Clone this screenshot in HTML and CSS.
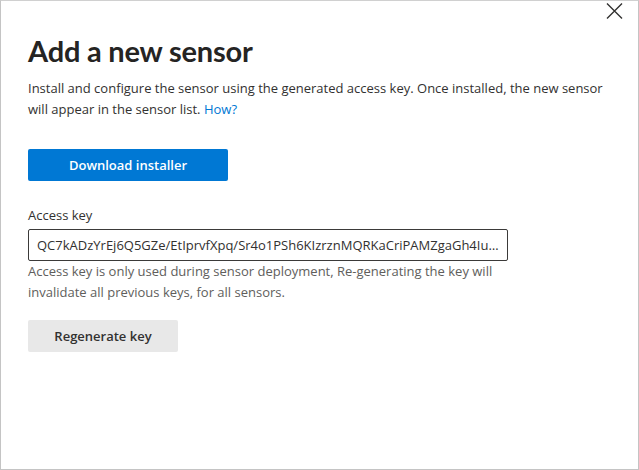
FILE: index.html
```html
<!doctype html>
<html lang="en">
 <head>
  <meta charset="UTF-8">
  <meta name="viewport" content="width=device-width, initial-scale=1.0">
  <title>Add a new sensor</title>
  <link rel="stylesheet" href="styles.css">
 </head>
 <body>
  <div class="panel">
   <button class="close" aria-label="Close">
    <svg width="17" height="16" viewBox="0 0 17 16"><path d="M1 0.5 L16 15.5 M16 0.5 L1 15.5" stroke="#323130" stroke-width="1.4" fill="none"/></svg>
   </button>
   <h1>Add a new sensor</h1>
   <p class="intro">Install and configure the sensor using the generated access key. Once installed, the new sensor will appear in the sensor list. <a href="#">How?</a></p>
   <button class="btn btn-primary">Download installer</button>
   <label class="field-label" for="accessKey">Access key</label>
   <input id="accessKey" class="field" type="text" readonly value="QC7kADzYrEj6Q5GZe/EtIprvfXpq/Sr4o1PSh6KIzrznMQRKaCriPAMZgaGh4IuQ8bYk2LsFsnMzBvJk">
   <p class="hint">Access key is only used during sensor deployment, Re-generating the key will invalidate all previous keys, for all sensors.</p>
   <button class="btn btn-default">Regenerate key</button>
  </div>
 </body>
</html>
```

FILE: styles.css
```css
html, body {
    margin: 0;
    height: 100%;
}

body {
    font-family: 'Open Sans', 'Noto Sans', sans-serif;
    color: #323130;
    background: white;
}

.panel {
    position: relative;
    box-sizing: border-box;
    height: 100%;
    border: 1px solid #c4c4c4;
    border-top-color: #d0d0d0;
    padding: 0 27px;
    display: flex;
    flex-direction: column;
    align-items: flex-start;
}

.close {
    position: absolute;
    top: 2px;
    right: 15px;
    padding: 0;
    border: none;
    background: none;
    cursor: pointer;
    line-height: 0;
}

h1 {
    font-family: Lato, 'Open Sans', sans-serif;
    font-size: 29px;
    font-weight: 700;
    margin: 28px 0 0 0;
    line-height: 44px;
    letter-spacing: -0.2px;
    color: #252423;
}

.intro {
    font-size: 13px;
    line-height: 21px;
    margin: 5px 0 0 0;
}

.intro a {
    color: #0078d4;
    text-decoration: none;
}

.btn {
    font-family: inherit;
    font-size: 13px;
    font-weight: 600;
    height: 32px;
    border: none;
    border-radius: 2px;
    cursor: pointer;
    padding: 0;
}

.btn-primary {
    width: 200px;
    margin-top: 29px;
    background: #0078d4;
    color: white;
}

.btn-default {
    width: 150px;
    margin-top: 17px;
    background: #e8e8e8;
    color: #323130;
}

.field-label {
    font-size: 13px;
    line-height: 20px;
    margin-top: 24px;
    font-weight: 400;
}

.field {
    box-sizing: border-box;
    width: 480px;
    height: 32px;
    margin-top: 4px;
    border: 1px solid #3b3a39;
    border-radius: 2px;
    padding: 0 8px;
    font-family: inherit;
    font-size: 13px;
    color: #323130;
    text-overflow: ellipsis;
    outline: none;
}

.hint {
    max-width: 480px;
    font-size: 13px;
    line-height: 21px;
    color: #605e5c;
    margin: 0;
}
```
